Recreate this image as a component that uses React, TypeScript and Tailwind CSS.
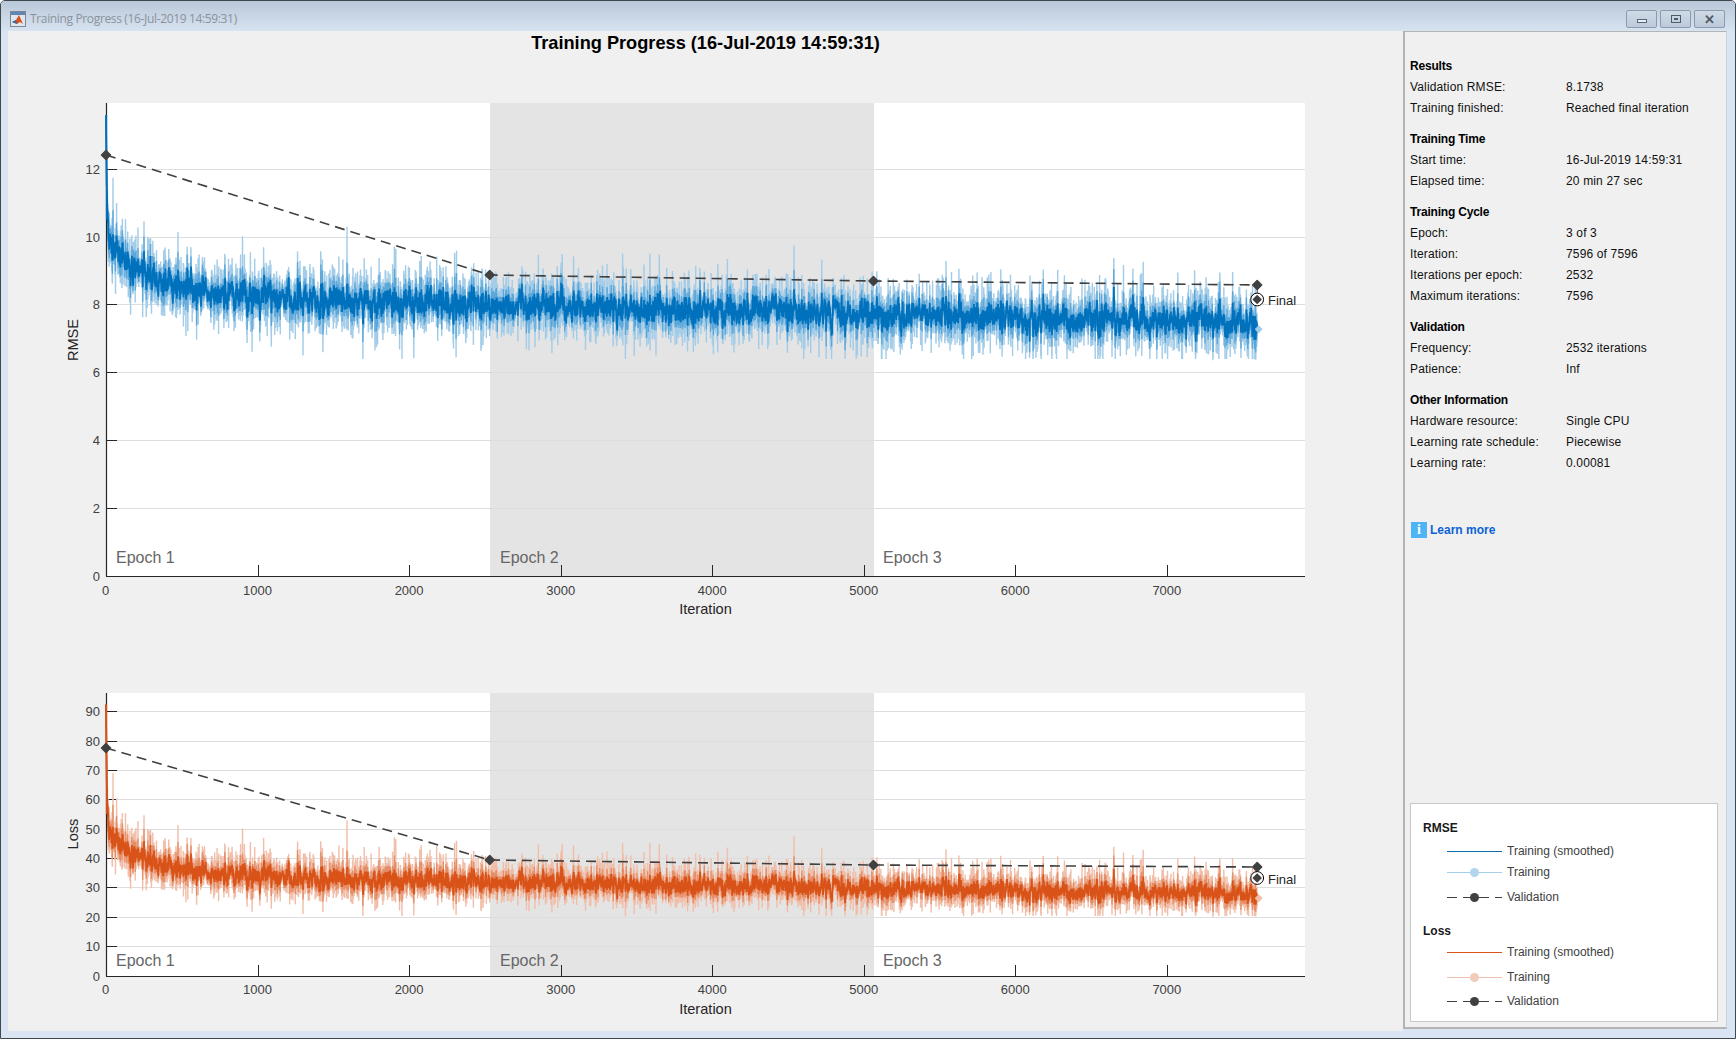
import React from "react";

function mulberry(a: number) {
  return () => {
    a |= 0; a = (a + 0x6d2b79f5) | 0;
    let t = Math.imul(a ^ (a >>> 15), 1 | a);
    t = (t + Math.imul(t ^ (t >>> 7), 61 | t)) ^ t;
    return ((t ^ (t >>> 14)) >>> 0) / 4294967296;
  };
}

const N = 7596;
const X0 = 106;
const XR = 151.55 / 1000;
const xOf = (i: number) => X0 + i * XR;
const spikes: Record<number, number> = { 1590: 10.3, 4540: 9.75, 6650: 9.38, 7183: 9.02, 7350: 8.95, 3010: 9.5, 4100: 9.35, 1040: 9.7, 46: 11.75, 70: 11 };

const rnd = mulberry(20190716);
const gauss = () => Math.sqrt(-2 * Math.log(rnd() + 1e-9)) * Math.cos(2 * Math.PI * rnd());
const raw: number[] = [];
for (let i = 0; i <= N; i++) {
  const t = i / N;
  const trend = 8.28 - 0.83 * t + 1.5 * Math.exp(-i / 300) + 3.4 * Math.exp(-i / 5);
  let v = trend + gauss() * 0.5;
  if (rnd() < 0.004) v += 0.4 + (-Math.log(rnd() + 1e-9)) * 0.25;
  if (spikes[i]) v = spikes[i];
  raw.push(Math.max(Math.min(v, 13.6), 6.4));
}
raw[0] = 13.6;
const ema = (a: number) => {
  const out: number[] = [];
  let s = raw[0];
  raw.forEach((v) => { s = s + a * (v - s); out.push(s); });
  return out;
};
const smooth = ema(0.3);
const mid = ema(0.6);

const makePath = (d: number[], y: (v: number) => number, map: (v: number) => number) =>
  "M" + d.map((v, i) => `${xOf(i).toFixed(1)} ${y(map(v)).toFixed(1)}`).join("L");

type PlotCfg = {
  viewY: number; viewH: number; top: number; bottom: number; unit: number; ticks: number[];
  label: string; labelY: number; dark: string; midC: string; light: string; map: (v: number) => number;
  val: number[]; fin: number; finT: number; epochY: number; xTickY: number; xLabelY: number;
};

function Diamond({ x, y, r = 4.5, fill = "#404040" }: { x: number; y: number; r?: number; fill?: string }) {
  return <path d={`M${x - r} ${y}L${x} ${y - r}L${x + r} ${y}L${x} ${y + r}Z`} fill={fill} stroke={fill} strokeWidth="1.5" strokeLinejoin="round" />;
}

function Plot(c: PlotCfg) {
  const y = (v: number) => c.bottom - v * c.unit;
  const vx = [0, 2532, 5064, 7596].map(xOf);
  const gy = (t: number) => Math.floor(y(t)) + 0.5;
  return (
    <svg className="block" width={1395} height={c.viewH} viewBox={`8 ${c.viewY} 1395 ${c.viewH}`}>
      <rect x={106} y={c.top} width={1199} height={c.bottom - c.top} fill="#ffffff" />
      <rect x={490} y={c.top} width={384} height={c.bottom - c.top} fill="#e4e4e4" />
      {c.ticks.filter((t) => t > 0).map((t) => (
        <line key={t} x1={106} x2={1305} y1={gy(t)} y2={gy(t)} stroke="#dcdcdc" strokeOpacity="0.95" />
      ))}
      {c.ticks.filter((t) => t > 0).map((t) => (
        <line key={t} x1={106} x2={117} y1={gy(t)} y2={gy(t)} stroke="#262626" />
      ))}
      {[1000, 2000, 3000, 4000, 5000, 6000, 7000].map((t) => (
        <line key={t} x1={Math.round(xOf(t)) + 0.5} x2={Math.round(xOf(t)) + 0.5} y1={c.bottom} y2={c.bottom - 11} stroke="#262626" />
      ))}
      <path d={makePath(raw, y, c.map)} fill="none" stroke={c.light} strokeWidth="1.4" />
      <path d={makePath(mid, y, c.map)} fill="none" stroke={c.midC} strokeWidth="1.3" />
      <path d={makePath(smooth, y, c.map)} fill="none" stroke={c.dark} strokeWidth="1.8" />
      <Diamond x={xOf(7596) + 1.5} y={y(c.map(smooth[N]))} r={3} fill={c.light} />
      <line x1={106.5} x2={106.5} y1={c.top} y2={c.bottom} stroke="#262626" strokeWidth="1.2" />
      <line x1={106} x2={1305} y1={c.bottom + 0.5} y2={c.bottom + 0.5} stroke="#262626" strokeWidth="1.2" />
      <line x1={106.5} x2={106.5} y1={y(c.map(raw[0]))} y2={y(c.map(10.5))} stroke={c.dark} strokeWidth="1.3" />

      <polyline points={vx.map((x, i) => `${x},${c.val[i]}`).join(" ")} fill="none" stroke="#404040" strokeWidth="1.6" strokeDasharray="10 6" />
      {vx.map((x, i) => <Diamond key={i} x={x} y={c.val[i]} />)}
      <line x1={vx[3]} x2={vx[3]} y1={c.val[3]} y2={c.fin} stroke="#404040" strokeWidth="1" />
      <circle cx={vx[3]} cy={c.fin} r={6.4} fill="#ffffff" stroke="#000000" strokeWidth="1" />
      <Diamond x={vx[3]} y={c.fin} r={3.8} />
      <text x={1268} y={c.finT} className="text-[13px] fill-[#262626]">Final</text>

      {["Epoch 1", "Epoch 2", "Epoch 3"].map((t, i) => (
        <text key={t} x={[116, 500, 883][i]} y={c.epochY} className="text-[16px] fill-[#666666]">{t}</text>
      ))}
      {c.ticks.map((t) => (
        <text key={t} x={100} y={y(t) + 4.5} textAnchor="end" className="text-[13px] fill-[#404040]">{t}</text>
      ))}
      {[0, 1000, 2000, 3000, 4000, 5000, 6000, 7000].map((t) => (
        <text key={t} x={t === 0 ? 105.5 : xOf(t)} y={c.xTickY} textAnchor="middle" className="text-[13px] fill-[#404040]">{t}</text>
      ))}
      <text x={705.5} y={c.xLabelY} textAnchor="middle" className="text-[14.6px] fill-[#262626]">Iteration</text>
      <text transform={`translate(78 ${c.labelY}) rotate(-90)`} textAnchor="middle" className="text-[14.6px] fill-[#262626]">{c.label}</text>
    </svg>
  );
}

const sections: [string, [string, string][]][] = [
  ["Results", [["Validation RMSE:", "8.1738"], ["Training finished:", "Reached final iteration"]]],
  ["Training Time", [["Start time:", "16-Jul-2019 14:59:31"], ["Elapsed time:", "20 min 27 sec"]]],
  ["Training Cycle", [["Epoch:", "3 of 3"], ["Iteration:", "7596 of 7596"], ["Iterations per epoch:", "2532"], ["Maximum iterations:", "7596"]]],
  ["Validation", [["Frequency:", "2532 iterations"], ["Patience:", "Inf"]]],
  ["Other Information", [["Hardware resource:", "Single CPU"], ["Learning rate schedule:", "Piecewise"], ["Learning rate:", "0.00081"]]],
];

function LegendRow({ kind, color, dot, label, mt }: { kind: "line" | "dot" | "dash"; color: string; dot?: string; label: string; mt: string }) {
  return (
    <div className={`flex items-center h-[14px] pl-[24px] gap-[5px] ${mt}`}>
      <svg width="55" height="14" viewBox="0 0 55 14" className="shrink-0">
        {kind === "dash" ? (
          <path d="M0 7.5H10M16 7.5H42M48 7.5H55" stroke={color} strokeWidth="1" />
        ) : (
          <line x1="0" x2="55" y1="7.5" y2="7.5" stroke={color} strokeWidth="1" />
        )}
        {kind !== "line" && <circle cx="27.5" cy="7.5" r="4.5" fill={dot} />}
      </svg>
      <span className="text-[12px] text-[#404040] leading-[14px]">{label}</span>
    </div>
  );
}

function Caption({ children }: { children: React.ReactNode }) {
  return <div className="text-[12px] font-bold text-[#1a1a1a] leading-[14px]">{children}</div>;
}

function WinBtn({ children }: { children: React.ReactNode }) {
  return (
    <div className="w-[31px] h-[18px] flex items-center justify-center rounded-[2px] border border-[#8c9aab] bg-gradient-to-b from-[#cfdae6] to-[#bccadb]">
      {children}
    </div>
  );
}

export default function App() {
  return (
    <div className="w-[1736px] h-[1039px] overflow-hidden flex flex-col bg-[#d9e5f2] border border-[#3f474f] rounded-t-[5px] font-['Liberation_Sans',Arial,sans-serif]">
      <div className="h-[30px] shrink-0 flex items-center pl-[9px] pr-[10px] bg-gradient-to-b from-[#b9c8d8] to-[#d7e3f1]">
        <svg width="16" height="16" viewBox="0 0 16 16" className="shrink-0 mt-[6px]">
          <rect x="0.5" y="0.5" width="15" height="15" fill="#dfe6ee" stroke="#7d8894" />
          <rect x="1" y="1" width="14" height="3" fill="#5f87b5" />
          <path d="M2 11 L6 9 L9 4 L13 13 L10 11 L7 13 Z" fill="#d9531e" />
          <path d="M2 11 L6 9 L7 13 Z" fill="#2d6fb3" />
        </svg>
        <span className="ml-[4px] mt-[6px] text-[12px] text-[#8b929b] font-['Open_Sans',sans-serif] tracking-[-0.35px]">Training Progress (16-Jul-2019 14:59:31)</span>
        <div className="ml-auto flex gap-[3px] mt-[6px]">
          <WinBtn><div className="w-[10px] h-[4px] mt-[4px] border border-[#5a6672] bg-[#e8eef5]" /></WinBtn>
          <WinBtn><div className="w-[10px] h-[8px] border border-[#4f5b67] flex items-center justify-center"><div className="w-[4px] h-[2px] bg-[#4f5b67]" /></div></WinBtn>
          <WinBtn><span className="text-[13px] font-bold text-[#4f5b67] leading-none">✕</span></WinBtn>
        </div>
      </div>

      <div className="flex mx-[7px]">
        <div className="w-[1395px] h-[1000px] shrink-0 bg-[#f0f0f0] flex flex-col">
          <div className="h-[54px] shrink-0 pt-[1px] text-center text-[18.2px] leading-[22px] font-bold text-black">Training Progress (16-Jul-2019 14:59:31)</div>
          <Plot viewY={85} viewH={555} top={103} bottom={576} unit={33.9} ticks={[0, 2, 4, 6, 8, 10, 12]} label="RMSE" labelY={340}
            dark="#0072bd" midC="#5ba7da" light="#a2cce8" map={(v) => v} val={[155, 275, 281, 285]} fin={299.5} finT={305} epochY={563} xTickY={595} xLabelY={614} />
          <Plot viewY={640} viewH={391} top={693} bottom={976} unit={2.937} ticks={[0, 10, 20, 30, 40, 50, 60, 70, 80, 90]} label="Loss" labelY={834}
            dark="#d95319" midC="#e58d66" light="#f1bfa9" map={(v) => (v * v) / 2} val={[748, 860, 865, 867]} fin={878} finT={884} epochY={966} xTickY={994} xLabelY={1014} />
        </div>
        <div className="w-[324px] h-[998px] shrink-0 bg-[#f0f0f0] border-l-2 border-r border-b-2 border-t border-[#b4b4b4] border-r-[#c8d2dc] flex flex-col">
          <div className="pt-[23px] pl-[5px]">
            {sections.map(([h, rows], si) => (
              <div key={h} className={si ? "mt-[10px]" : ""}>
                <div className="h-[21px] flex items-center text-[12px] font-bold text-black tracking-[-0.2px]">{h}</div>
                {rows.map(([a, b]) => (
                  <div key={a} className="h-[21px] flex items-center text-[12px] text-[#111111] tracking-[0.15px]">
                    <span className="w-[156px] shrink-0">{a}</span>
                    <span>{b}</span>
                  </div>
                ))}
              </div>
            ))}
            <div className="mt-[48px] ml-[1px] flex items-center gap-[3px]">
              <div className="w-[16px] h-[16px] bg-[#4db4f6] flex items-center justify-center text-white font-bold text-[14px] leading-none font-['Liberation_Serif',serif]">i</div>
              <span className="text-[12px] font-bold text-[#0b62d6]">Learn more</span>
            </div>
          </div>
          <div className="mt-auto mb-[5px] ml-[5px] mr-[8px] h-[219px] bg-white border border-[#c8c8c8] pt-[17px] pl-[12px]">
            <Caption>RMSE</Caption>
            <LegendRow kind="line" color="#0f6cab" label="Training (smoothed)" mt="mt-[9px]" />
            <LegendRow kind="dot" color="#a2cfe9" dot="#b3d6ec" label="Training" mt="mt-[7px]" />
            <LegendRow kind="dash" color="#404040" dot="#404040" label="Validation" mt="mt-[11px]" />
            <Caption>
              <span className="block mt-[20px]">Loss</span>
            </Caption>
            <LegendRow kind="line" color="#d95319" label="Training (smoothed)" mt="mt-[7px]" />
            <LegendRow kind="dot" color="#f0c3b0" dot="#f2ccbb" label="Training" mt="mt-[11px]" />
            <LegendRow kind="dash" color="#404040" dot="#404040" label="Validation" mt="mt-[10px]" />
          </div>
        </div>
      </div>
    </div>
  );
}
